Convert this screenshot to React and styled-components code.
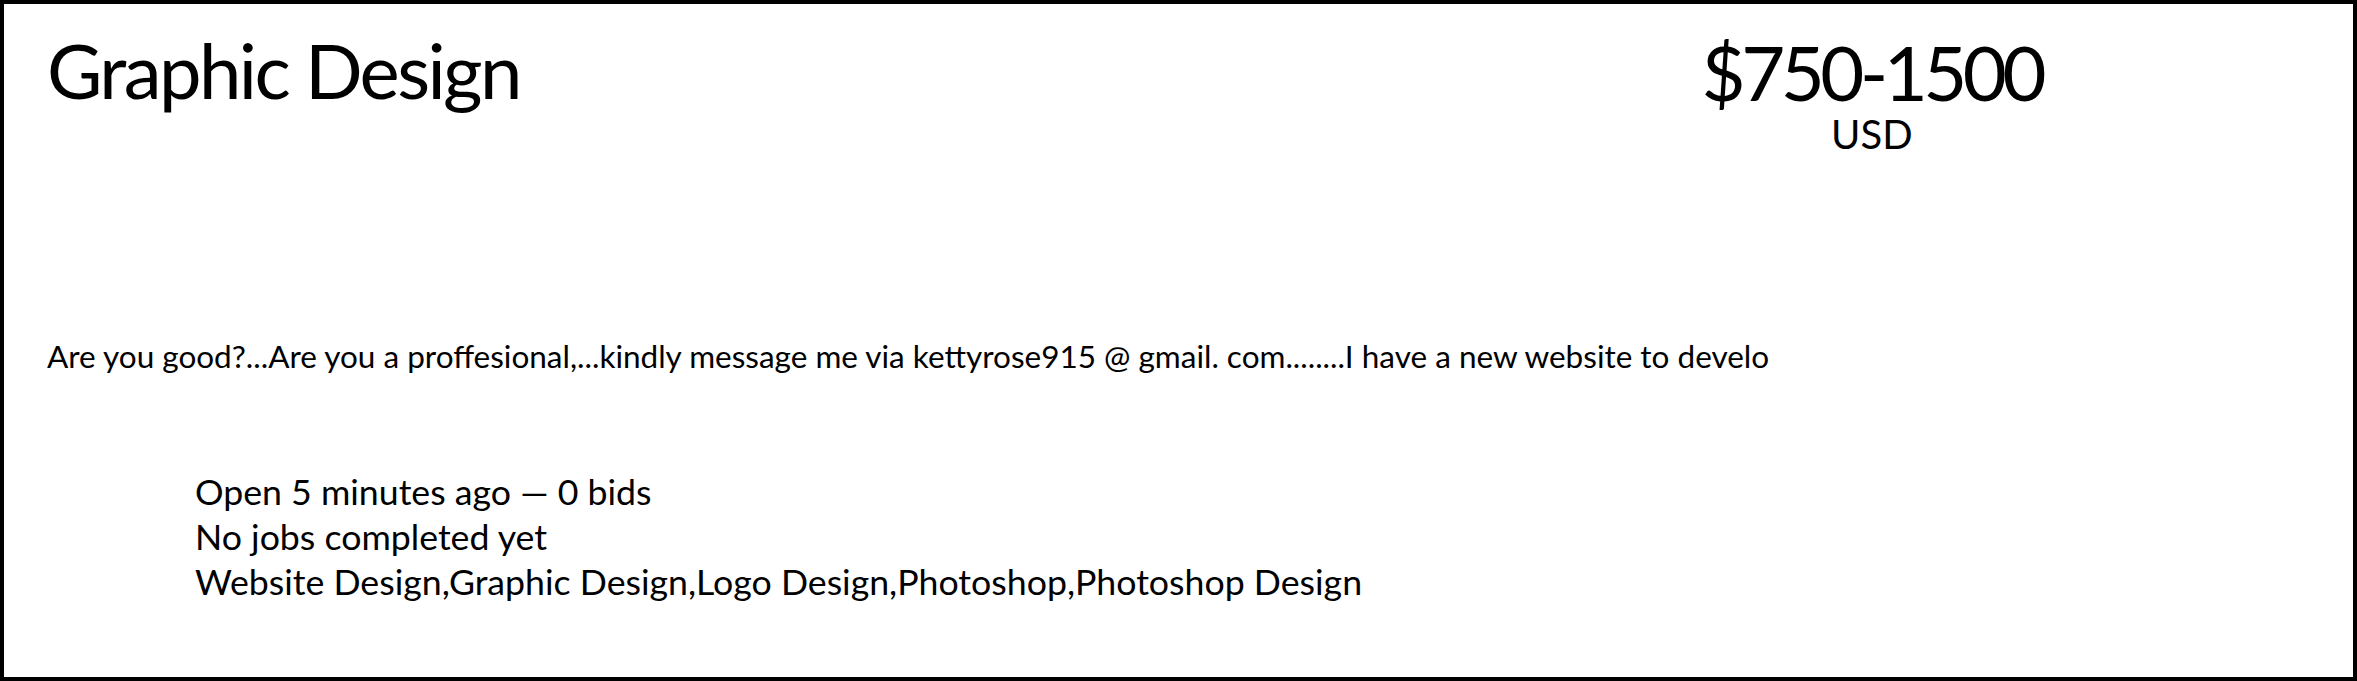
import React from 'react';
import styled, { createGlobalStyle } from 'styled-components';

const GlobalStyle = createGlobalStyle`
  html, body {
    margin: 0;
    padding: 0;
    background: #ffffff;
  }
  body {
    font-family: Lato, "Open Sans", sans-serif;
    color: #000000;
  }
`;

const Card = styled.section`
  box-sizing: border-box;
  width: 2357px;
  height: 681px;
  border: 4px solid #000000;
  padding: 28px 0 0 43px;
  display: flex;
  flex-direction: column;
`;

const TopRow = styled.div`
  display: flex;
  justify-content: space-between;
  align-items: flex-start;
  padding-right: 311px;
`;

const Title = styled.h1`
  margin: 0;
  font-size: 76px;
  font-weight: 400;
  line-height: 1;
  letter-spacing: -2.6px;
`;

const Budget = styled.div`
  display: flex;
  flex-direction: column;
  align-items: center;
`;

const Price = styled.div`
  font-size: 76px;
  line-height: 80px;
  letter-spacing: -4.5px;
`;

const Currency = styled.div`
  font-size: 40px;
  line-height: 40px;
  margin-top: 2px;
`;

const Description = styled.p`
  margin: 187px 0 0;
  font-size: 31.5px;
  line-height: 1;
`;

const Meta = styled.ul`
  list-style: none;
  margin: 96px 0 0;
  padding: 0 0 0 148px;
  font-size: 35.7px;
  line-height: 45px;
`;

const MetaLine = styled.li`
  margin: 0;
`;

export default function App() {
  return (
    <>
      <GlobalStyle />
      <Card>
        <TopRow>
          <Title>Graphic Design</Title>
          <Budget>
            <Price>$750-1500</Price>
            <Currency>USD</Currency>
          </Budget>
        </TopRow>
        <Description>
          Are you good?...Are you a proffesional,...kindly message me via kettyrose915 @ gmail. com........I have a new website to develo
        </Description>
        <Meta>
          <MetaLine>Open 5 minutes ago — 0 bids</MetaLine>
          <MetaLine>No jobs completed yet</MetaLine>
          <MetaLine>Website Design,Graphic Design,Logo Design,Photoshop,Photoshop Design</MetaLine>
        </Meta>
      </Card>
    </>
  );
}
